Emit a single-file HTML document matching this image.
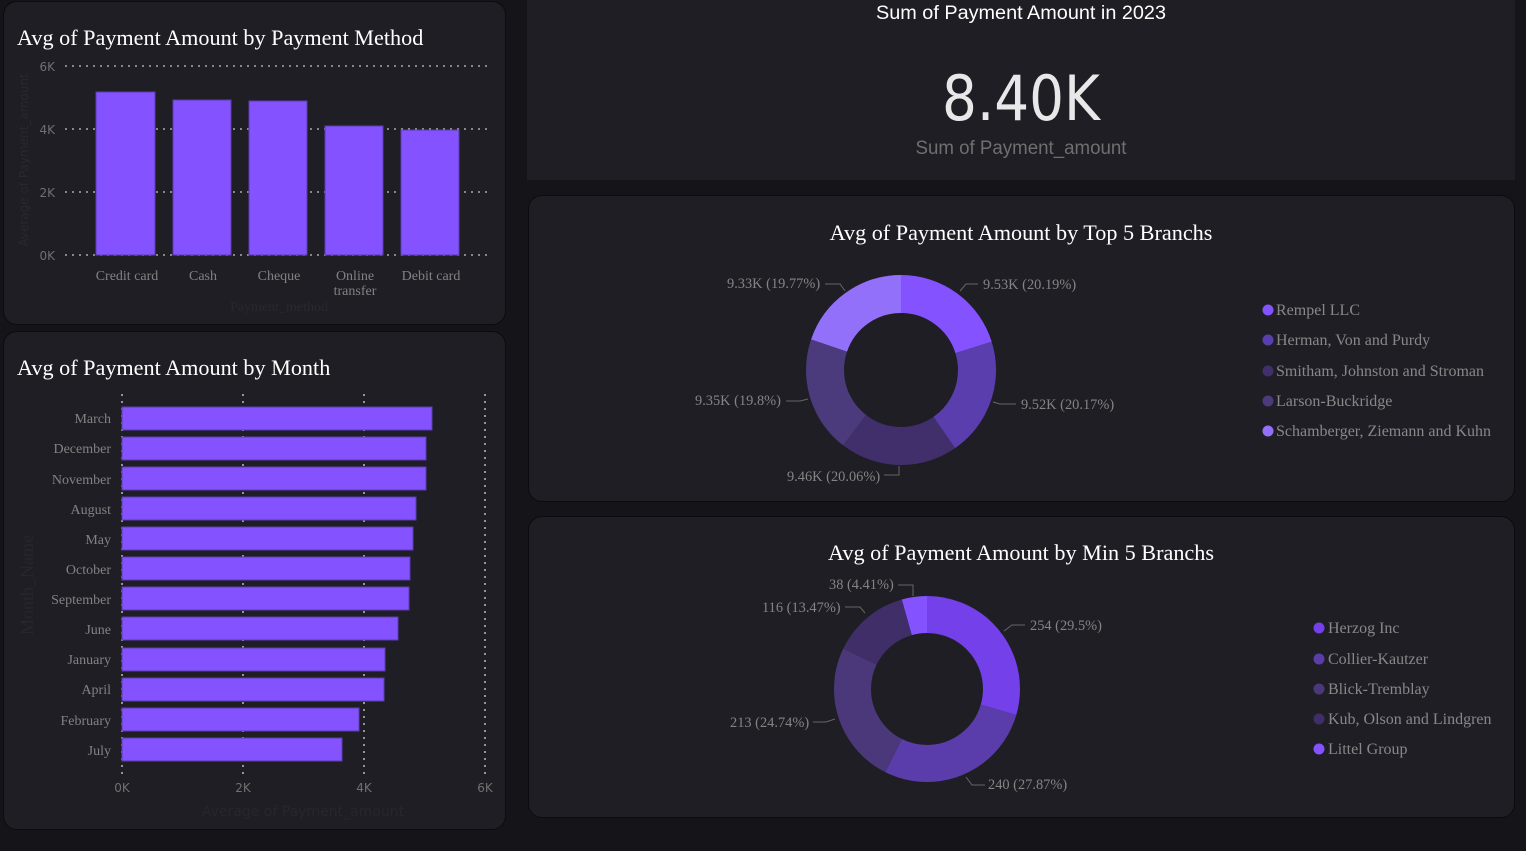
<!DOCTYPE html>
<html><head><meta charset="utf-8"><style>
html,body{margin:0;padding:0;background:#141419;width:1526px;height:851px;overflow:hidden}
.card{position:absolute;background:#1f1e25;border:1px solid #0c0c10;border-radius:14px}
svg{position:absolute;left:0;top:0}
.t{font-family:"Liberation Serif",serif;fill:#fff;font-size:22.2px}
.lab{font-family:"Liberation Serif",serif;fill:#828282;font-size:14px}
.ax{font-family:"DejaVu Sans",sans-serif;fill:#707070;font-size:12px}
.leg{font-family:"Liberation Serif",serif;fill:#888;font-size:16px}
.dl{font-family:"Liberation Serif",serif;fill:#848484;font-size:14.4px}
</style></head><body>
<div class="card" style="left:3px;top:1px;width:501px;height:322px"></div>
<div class="card" style="left:3px;top:331px;width:501px;height:497px"></div>
<div style="position:absolute;left:527px;top:0;width:988px;height:180px;background:#1f1e25"></div>
<div class="card" style="left:528px;top:195px;width:985px;height:305px"></div>
<div class="card" style="left:528px;top:516px;width:985px;height:300px"></div>
<svg width="1526" height="851" viewBox="0 0 1526 851">
<text class="t" x="17" y="45">Avg of Payment Amount by Payment Method</text>
<g stroke="#aaa" stroke-width="1.5" stroke-dasharray="2 5">
<line x1="65" y1="66" x2="490" y2="66"/><line x1="65" y1="129" x2="490" y2="129"/><line x1="65" y1="192" x2="490" y2="192"/><line x1="65" y1="255" x2="490" y2="255"/></g>
<g class="ax" text-anchor="end"><text x="55" y="71">6K</text><text x="55" y="134">4K</text><text x="55" y="197">2K</text><text x="55" y="260">0K</text></g>
<g fill="#8452fe" stroke="#5b3ead" stroke-width="1">
<rect x="96" y="92" width="59" height="163"/><rect x="173" y="100" width="58" height="155"/><rect x="249" y="101" width="58" height="154"/><rect x="325" y="126" width="58" height="129"/><rect x="401" y="130" width="58" height="125"/></g>
<g class="lab" text-anchor="middle"><text x="127" y="280">Credit card</text><text x="203" y="280">Cash</text><text x="279" y="280">Cheque</text><text x="355" y="280">Online</text><text x="355" y="295">transfer</text><text x="431" y="280">Debit card</text>
<text x="279" y="311" style="fill:#29282f">Payment_method</text></g>
<text class="ax" style="fill:#29282f" transform="translate(28,160) rotate(-90)" text-anchor="middle">Average of Payment_amount</text>
<text class="t" x="17" y="375">Avg of Payment Amount by Month</text>
<g stroke="#bbb" stroke-width="1.5" stroke-dasharray="2 5">
<line x1="122" y1="394" x2="122" y2="775"/><line x1="243" y1="394" x2="243" y2="775"/><line x1="364" y1="394" x2="364" y2="775"/><line x1="485" y1="394" x2="485" y2="775"/></g>
<g fill="#8452fe" stroke="#5b3ead" stroke-width="1">
<rect x="122" y="407" width="310" height="23"/><rect x="122" y="437" width="304" height="23"/><rect x="122" y="467" width="304" height="23"/><rect x="122" y="497" width="294" height="23"/><rect x="122" y="527" width="291" height="23"/><rect x="122" y="557" width="288" height="23"/><rect x="122" y="587" width="287" height="23"/><rect x="122" y="617" width="276" height="23"/><rect x="122" y="648" width="263" height="23"/><rect x="122" y="678" width="262" height="23"/><rect x="122" y="708" width="237" height="23"/><rect x="122" y="738" width="220" height="23"/></g>
<g class="lab" text-anchor="end"><text x="111" y="423">March</text><text x="111" y="453">December</text><text x="111" y="484">November</text><text x="111" y="514">August</text><text x="111" y="544">May</text><text x="111" y="574">October</text><text x="111" y="604">September</text><text x="111" y="634">June</text><text x="111" y="664">January</text><text x="111" y="694">April</text><text x="111" y="725">February</text><text x="111" y="755">July</text></g>
<g class="ax" text-anchor="middle"><text x="122" y="792">0K</text><text x="243" y="792">2K</text><text x="364" y="792">4K</text><text x="485" y="792">6K</text></g>
<text x="303" y="816" text-anchor="middle" style="font-family:'DejaVu Sans',sans-serif;font-size:14px;fill:#27262d">Average of Payment_amount</text>
<text transform="translate(33,585) rotate(-90)" text-anchor="middle" style="font-family:'Liberation Serif',serif;font-size:18px;fill:#27262d">Month_Name</text>
<text x="1021" y="19" text-anchor="middle" textLength="290" lengthAdjust="spacingAndGlyphs" style="font-family:'Liberation Sans',sans-serif;font-size:19px;fill:#fff">Sum of Payment Amount in 2023</text>
<text x="1021" y="120" text-anchor="middle" textLength="158" lengthAdjust="spacingAndGlyphs" style="font-family:'DejaVu Sans Condensed','Liberation Sans',sans-serif;font-size:62px;fill:#e8e8e8">8.40K</text>
<text x="1021" y="154" text-anchor="middle" textLength="211" lengthAdjust="spacingAndGlyphs" style="font-family:'Liberation Sans',sans-serif;font-size:19px;fill:#6f6f6f">Sum of Payment_amount</text>
<text class="t" x="1021" y="240" text-anchor="middle">Avg of Payment Amount by Top 5 Branchs</text>
<g fill="none" stroke-width="38" transform="rotate(-90 901 370)">
<circle cx="901" cy="370" r="76" stroke="#8452fe" stroke-dasharray="96.4 477.5" stroke-dashoffset="0"/>
<circle cx="901" cy="370" r="76" stroke="#5b3ead" stroke-dasharray="96.3 477.5" stroke-dashoffset="-96.4"/>
<circle cx="901" cy="370" r="76" stroke="#402f6b" stroke-dasharray="95.8 477.5" stroke-dashoffset="-192.7"/>
<circle cx="901" cy="370" r="76" stroke="#4b3a7c" stroke-dasharray="94.5 477.5" stroke-dashoffset="-288.5"/>
<circle cx="901" cy="370" r="76" stroke="#9370fa" stroke-dasharray="94.5 477.5" stroke-dashoffset="-383"/>
</g>
<g stroke="#666" fill="none"><polyline points="960,291 966,284 978,284"/><polyline points="993,402 1000,404 1016,404"/><polyline points="899,466 899,475 884,475"/><polyline points="808,399 800,401 786,401"/><polyline points="845,291 840,284 825,284"/></g>
<g class="dl"><text x="983" y="289">9.53K (20.19%)</text><text x="1021" y="409">9.52K (20.17%)</text><text x="787" y="481">9.46K (20.06%)</text><text x="695" y="405">9.35K (19.8%)</text><text x="727" y="288">9.33K (19.77%)</text></g>
<g class="leg"><circle cx="1268" cy="310" r="5.5" fill="#8452fe"/><text x="1276" y="315">Rempel LLC</text>
<circle cx="1268" cy="340" r="5.5" fill="#5b3ead"/><text x="1276" y="345">Herman, Von and Purdy</text>
<circle cx="1268" cy="371" r="5.5" fill="#402f6b"/><text x="1276" y="376">Smitham, Johnston and Stroman</text>
<circle cx="1268" cy="401" r="5.5" fill="#4b3a7c"/><text x="1276" y="406">Larson-Buckridge</text>
<circle cx="1268" cy="431" r="5.5" fill="#9370fa"/><text x="1276" y="436">Schamberger, Ziemann and Kuhn</text></g>
<text class="t" x="1021" y="560" text-anchor="middle">Avg of Payment Amount by Min 5 Branchs</text>
<g fill="none" stroke-width="37" transform="rotate(-90 927 689)">
<circle cx="927" cy="689" r="74.5" stroke="#7340e9" stroke-dasharray="138.1 468.1" stroke-dashoffset="0"/>
<circle cx="927" cy="689" r="74.5" stroke="#5a3dab" stroke-dasharray="130.5 468.1" stroke-dashoffset="-138.1"/>
<circle cx="927" cy="689" r="74.5" stroke="#4b387b" stroke-dasharray="115.8 468.1" stroke-dashoffset="-268.6"/>
<circle cx="927" cy="689" r="74.5" stroke="#3f2e68" stroke-dasharray="63.1 468.1" stroke-dashoffset="-384.4"/>
<circle cx="927" cy="689" r="74.5" stroke="#8452fe" stroke-dasharray="20.6 468.1" stroke-dashoffset="-447.5"/>
</g>
<g stroke="#666" fill="none"><polyline points="1004,631 1012,625 1025,625"/><polyline points="966,777 972,785 985,785"/><polyline points="835,719 826,722 813,722"/><polyline points="865,613 860,607 845,607"/><polyline points="913,596 913,585 898,585"/></g>
<g class="dl"><text x="1030" y="630">254 (29.5%)</text><text x="988" y="789">240 (27.87%)</text><text x="730" y="727">213 (24.74%)</text><text x="762" y="612">116 (13.47%)</text><text x="829" y="589">38 (4.41%)</text></g>
<g class="leg"><circle cx="1319" cy="628" r="5.5" fill="#7340e9"/><text x="1328" y="633">Herzog Inc</text>
<circle cx="1319" cy="659" r="5.5" fill="#5a3dab"/><text x="1328" y="664">Collier-Kautzer</text>
<circle cx="1319" cy="689" r="5.5" fill="#4b387b"/><text x="1328" y="694">Blick-Tremblay</text>
<circle cx="1319" cy="719" r="5.5" fill="#3f2e68"/><text x="1328" y="724">Kub, Olson and Lindgren</text>
<circle cx="1319" cy="749" r="5.5" fill="#8452fe"/><text x="1328" y="754">Littel Group</text></g>
</svg>
</body></html>
